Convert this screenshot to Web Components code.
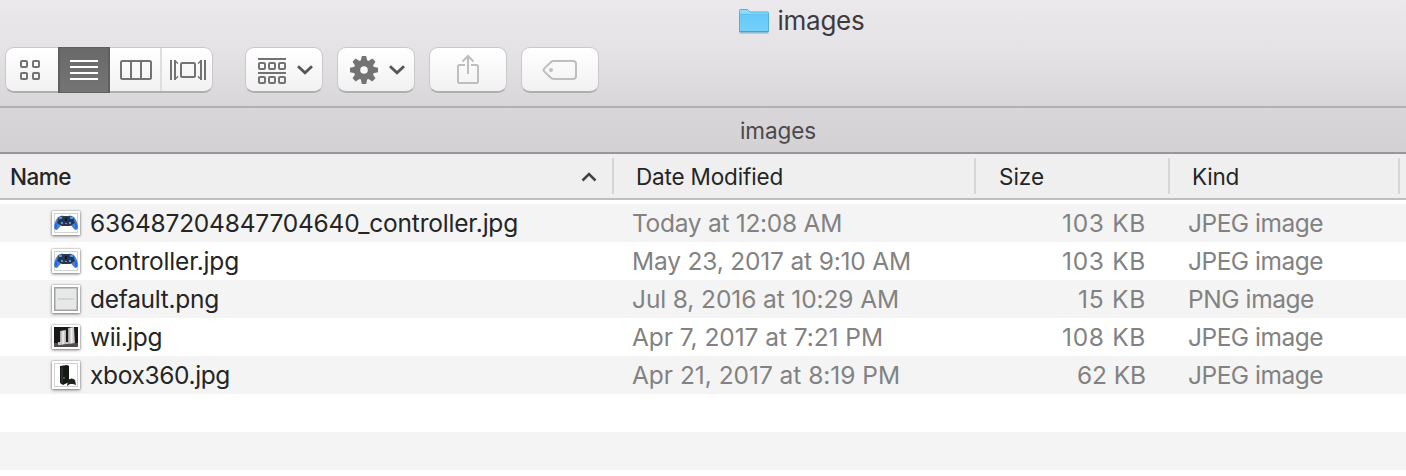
<!DOCTYPE html>
<html lang="en"><head><meta charset="utf-8"><title>images</title>
<style>html,body{margin:0;height:100%;background:#fff;overflow:hidden}body{font-family:Inter,"Liberation Sans",sans-serif;font-weight:430}</style></head>
<body><finder-window></finder-window>
<script>
const define=(name,html,setup)=>customElements.define(name,class extends HTMLElement{
  connectedCallback(){
    if(this.shadowRoot)return;
    const t=document.createElement('template');
    t.innerHTML=html;
    this.attachShadow({mode:'open'}).append(t.content.cloneNode(true));
    if(setup)setup(this,this.shadowRoot);
  }
});

// Label whose tracking is adjusted so that its advance equals the "w" attribute.
define('fit-text',`<style>:host{display:inline-block;white-space:pre}span{display:inline-block}</style><span><slot></slot></span>`,(el,root)=>{
  const s=root.querySelector('span'),w=+el.getAttribute('w'),n=el.textContent.length;
  const natural=s.getBoundingClientRect().width;
  s.style.letterSpacing=((w-natural)/n)+'px';
});

const icons={
grid:`<svg width="22" height="22" fill="none" stroke="#737373" stroke-width="2"><rect x="2" y="2" width="6" height="6" rx="1"/><rect x="14" y="2" width="6" height="6" rx="1"/><rect x="2" y="14" width="6" height="6" rx="1"/><rect x="14" y="14" width="6" height="6" rx="1"/></svg>`,
list:`<svg width="28" height="22" stroke="#fff" stroke-width="2"><path d="M0 2h28M0 8h28M0 14h28M0 20h28"/></svg>`,
columns:`<svg width="32" height="22" fill="none" stroke="#737373" stroke-width="2"><rect x="1" y="2" width="30" height="18" rx="1.5"/><path d="M11 2v18M21 2v18"/></svg>`,
flow:`<svg width="36" height="22" fill="none" stroke="#737373" stroke-width="2"><rect x="11" y="4" width="14" height="14" rx="1.5"/><path d="M1 1v20M35 1v20"/><path d="M5 1v20M31 1v20"/><path d="M5 2l3 2.500M5 20l3-2.500M31 2l-3 2.500M31 20l-3-2.500" stroke-width="1.6"/></svg>`,
arrange:`<svg width="28" height="28" fill="none" stroke="#737373" stroke-width="2"><path d="M0 3h28M0 17h28"/><rect x="1" y="7" width="6" height="6" rx="1"/><rect x="11" y="7" width="6" height="6" rx="1"/><rect x="21" y="7" width="6" height="6" rx="1"/><rect x="1" y="21" width="6" height="6" rx="1"/><rect x="11" y="21" width="6" height="6" rx="1"/><rect x="21" y="21" width="6" height="6" rx="1"/></svg>`,
gear:`<svg width="28" height="28" viewBox="-14 -14 28 28"><circle r="7" fill="none" stroke="#737373" stroke-width="6.4"/><g fill="#737373">${[0,45,90,135,180,225,270,315].map(a=>`<path d="M-3.2-9L-2.2-14H2.2L3.2-9Z" transform="rotate(${a})"/>`).join('')}</g></svg>`,
chevron:`<svg width="16" height="10" fill="none" stroke="#555" stroke-width="2.8"><path d="M1 1.300l7 6.500 7-6.500"/></svg>`,
share:`<svg width="22" height="32" fill="none" stroke="#bebebe" stroke-width="2"><path d="M8 11H2.500q-1.500 0-1.500 1.500V27.500q0 1.500 1.500 1.500H19.500q1.500 0 1.500-1.500V12.500q0-1.500-1.500-1.500H14M11 20V2M5.500 7.500L11 2l5.500 5.500"/></svg>`,
tag:`<svg width="36" height="22" fill="none" stroke="#bebebe" stroke-width="2"><path d="M11.500 2H31q3 0 3 3V17q0 3-3 3H11.500Q10 20 8.800 18.800L2.400 12.600Q1 11 2.400 9.400L8.800 3.200Q10 2 11.500 2Z"/><circle cx="9" cy="11" r="2" fill="#bebebe" stroke="none"/></svg>`,
folder:`<svg width="32" height="26"><defs><linearGradient id="a" x2="0" y2="1"><stop stop-color="#66c9f8"/><stop offset="1" stop-color="#75d0fa"/></linearGradient></defs><path d="M1.500 25h29" stroke="#a9a6aa"/><path d="M1.500 23V2.500q0-1 1-1h7l2.500 2.500h17.500q1 0 1 1V23q0 1-1 1h-27q-1 0-1-1Z" fill="#8edbfb" stroke="#4fb1de"/><path d="M2 6.500h28V23H2Z" fill="url(#a)"/><path d="M2 6.300h28" stroke="#4db6e6" stroke-width=".7"/><path d="M1.500 23.500h29" stroke="#3ea4d3"/></svg>`
};
define('finder-icon',`<style>:host{display:block;flex:none}svg{display:block}</style>`,(el,root)=>root.append(Object.assign(document.createElement('template'),{innerHTML:icons[el.getAttribute('name')]}).content));

define('tool-button',`<style>:host{display:flex;box-sizing:border-box;width:78px;height:46px;border:1px solid #c9c7ca;border-bottom:2px solid #b0aeb1;border-radius:9px;background:linear-gradient(#fff,#f1f1f1);align-items:center;justify-content:center;gap:11px;padding:1px 0 0 3px}:host([single]){padding-left:0}</style><slot></slot>`);

define('view-switcher',`<style>
:host{display:flex;box-sizing:border-box;width:208px;height:46px;border:1px solid #c9c7ca;border-bottom:2px solid #b0aeb1;border-radius:9px;background:linear-gradient(#fff,#f1f1f1)}
div{display:flex;align-items:center;justify-content:center;box-sizing:border-box;padding-top:1px}
.g{width:52px;padding-right:4px}.l{width:52px;height:46px;margin-top:-1px;padding-top:0;background:linear-gradient(#696969,#747474);border:2px solid #5f5f5f;border-width:1px 2px}.c{width:50px;padding-left:2px}.f{width:52px;border-left:2px solid #dedede;padding-left:2px}
</style><div class="g"><finder-icon name="grid"></finder-icon></div><div class="l"><finder-icon name="list"></finder-icon></div><div class="c"><finder-icon name="columns"></finder-icon></div><div class="f"><finder-icon name="flow"></finder-icon></div>`);

define('window-head',`<style>
:host{display:block;box-sizing:border-box;height:108px;border-bottom:2px solid #b2b0b3;background:linear-gradient(#ece9ed,#e5e2e6 50%,#d8d6d9)}
.title{display:flex;justify-content:center;align-items:center;height:42px;gap:8px;color:#3e3b3f;font-size:26px;line-height:42px;padding-left:196px}
.title finder-icon{margin-top:-1px}
.tools{display:flex;gap:14px;padding:5px 0 0 5px}view-switcher{margin-right:18px}
</style><div class="title"><finder-icon name="folder"></finder-icon><fit-text w="87">images</fit-text></div>
<div class="tools"><view-switcher></view-switcher><tool-button><finder-icon name="arrange"></finder-icon><finder-icon name="chevron"></finder-icon></tool-button><tool-button><finder-icon name="gear"></finder-icon><finder-icon name="chevron"></finder-icon></tool-button><tool-button single><finder-icon name="share"></finder-icon></tool-button><tool-button single><finder-icon name="tag"></finder-icon></tool-button></div>`);

define('tab-bar',`<style>:host{display:flex;justify-content:center;box-sizing:border-box;height:46px;border-bottom:2px solid #979598;background:linear-gradient(#d8d6d8,#d3d1d4);font-size:22.5px;line-height:45px;color:#4b494c;padding-left:150px}</style><fit-text w="76">images</fit-text>`);

define('column-head',`<style>
:host{display:grid;grid-template-columns:614px 362px 194px 230px;height:44px;border-bottom:2px solid #bebebe;background:#efefef;color:#252525;font-size:22.5px;line-height:44px}
div{display:flex;align-items:center;box-sizing:border-box;height:36px;margin-top:4px;border-right:2px solid #d6d6d6;padding:1px 0 0 22px}
.n{padding-left:10px;padding-right:15px;justify-content:space-between;font-weight:500}.s{padding-left:23px}
</style><div class="n"><fit-text w="61">Name</fit-text><svg width="16" height="12" fill="none" stroke="#444" stroke-width="2.600"><path d="M1.500 9.500L8 3l6.500 6.500"/></svg></div><div><fit-text w="147">Date Modified</fit-text></div><div class="s"><fit-text w="45">Size</fit-text></div><div class="k"><fit-text w="47">Kind</fit-text></div>`);

const pad=`<path d="M4 4L8 2.500Q12 4 16 2.500L20 4Q24 9 24 15Q22 18.500 20 16L17 12.500H7L4 16Q2 18.500 0 15Q0 9 4 4Z" fill="#4c80cc"/><path d="M5 4Q12 2 19 4L21 10L16 13H8L3 10Z" fill="#29364f"/><path d="M1 11l2-1v5l-2 1zM23 11l-2-1v5l2 1z" fill="#1769ff"/><path d="M5 4h3v2H5zM16 4h3v2h-3zM7 9h2v2H7zM15 9h2v2h-2zM11 10h2v1h-2z" fill="#4698ef"/><path d="M11 5h2v3h-2z" fill="#101722"/>`;
const pictures={
pad:`<rect x=".5" y=".5" width="23" height="19" fill="#fff" stroke="#d2d2d2"/>${pad}`,
blank:`<rect x=".750" y=".750" width="22.500" height="22.500" fill="#e7e9e8" stroke="#a2a2a2" stroke-width="1.500"/><path d="M4 12h16" stroke="#b4b6b5" stroke-dasharray="2 .5"/>`,
wii:`<defs><linearGradient id="w"><stop stop-color="#999"/><stop offset=".5" stop-color="#f1edee"/><stop offset="1" stop-color="#aaa"/></linearGradient></defs><path d="M0 0h24v20H0z" fill="#191718"/><path d="M0 16h24v4H0z" fill="#514d4e"/><path d="M6 4l6-1v14l-6 1z" fill="url(#w)"/><path d="M14 1l6-1 1 16-7 1z" fill="url(#w)"/><path d="M4 15h3v3H4zM12 15h2v2h-2z" fill="#c8c4c5"/>`,
xbox:`<rect x=".5" y=".5" width="23" height="23" fill="#fff" stroke="#d2d2d2"/><path d="M6 3l7-1 2 1v16l-6 3-3-2z" fill="#171917"/><path d="M8 4v16" stroke="#414641"/><path d="M14 17q4-3 7 0l1 5-3-1h-3l-3 2z" fill="#202220"/><circle cx="10" cy="15" r="1" fill="#537044"/>`
};
define('file-thumb',`<style>:host{display:flex;align-items:center;justify-content:center;width:28px;background:#fff;box-shadow:0 0 1px #777,0 1px 3px #777}svg{display:block}</style>`,(el,root)=>{
  const k=el.getAttribute('name'),h=k==='blank'||k==='xbox'?24:20;
  el.style.height=h+4+'px';
  root.append(Object.assign(document.createElement('template'),{innerHTML:`<svg width="24" height="${h}">${pictures[k]}</svg>`}).content);
});

define('file-row',`<style>
:host{display:grid;grid-template-columns:632px 344px 170px 1fr;height:38px;background:#fff;color:#828282;font-size:24.5px;line-height:39px}
:host(:nth-of-type(odd)){background:#f4f4f4}
div{white-space:nowrap;height:38px}.name{display:flex;align-items:center;padding-left:52px;gap:10px;color:#252525}.size{text-align:right}.kind{padding-left:42px}
</style><div class="name"><slot name="thumb"></slot><slot name="name"></slot></div><div><slot name="date"></slot></div><div class="size"><slot name="size"></slot></div><div class="kind"><slot name="kind"></slot></div>`);

const files=[['pad','636487204847704640_controller.jpg',428,'Today at 12:08 AM',210,'103 KB',84,'JPEG image',135],
['pad','controller.jpg',149,'May 23, 2017 at 9:10 AM',279,'103 KB',84,'JPEG image',135],
['blank','default.png',129,'Jul 8, 2016 at 10:29 AM',267,'15 KB',68,'PNG image',126],
['wii','wii.jpg',72,'Apr 7, 2017 at 7:21 PM',251,'108 KB',84,'JPEG image',135],
['xbox','xbox360.jpg',140,'Apr 21, 2017 at 8:19 PM',268,'62 KB',69,'JPEG image',135]];
define('finder-window',`<style>:host{display:block}main{padding-top:4px}</style><window-head></window-head><tab-bar></tab-bar><column-head></column-head><main>${files.map(f=>`<file-row><file-thumb slot="thumb" name="${f[0]}"></file-thumb><fit-text slot="name" w="${f[2]}">${f[1]}</fit-text><fit-text slot="date" w="${f[4]}">${f[3]}</fit-text><fit-text slot="size" w="${f[6]}">${f[5]}</fit-text><fit-text slot="kind" w="${f[8]}">${f[7]}</fit-text></file-row>`).join('')}<file-row></file-row><file-row></file-row></main>`);
</script></body></html>
